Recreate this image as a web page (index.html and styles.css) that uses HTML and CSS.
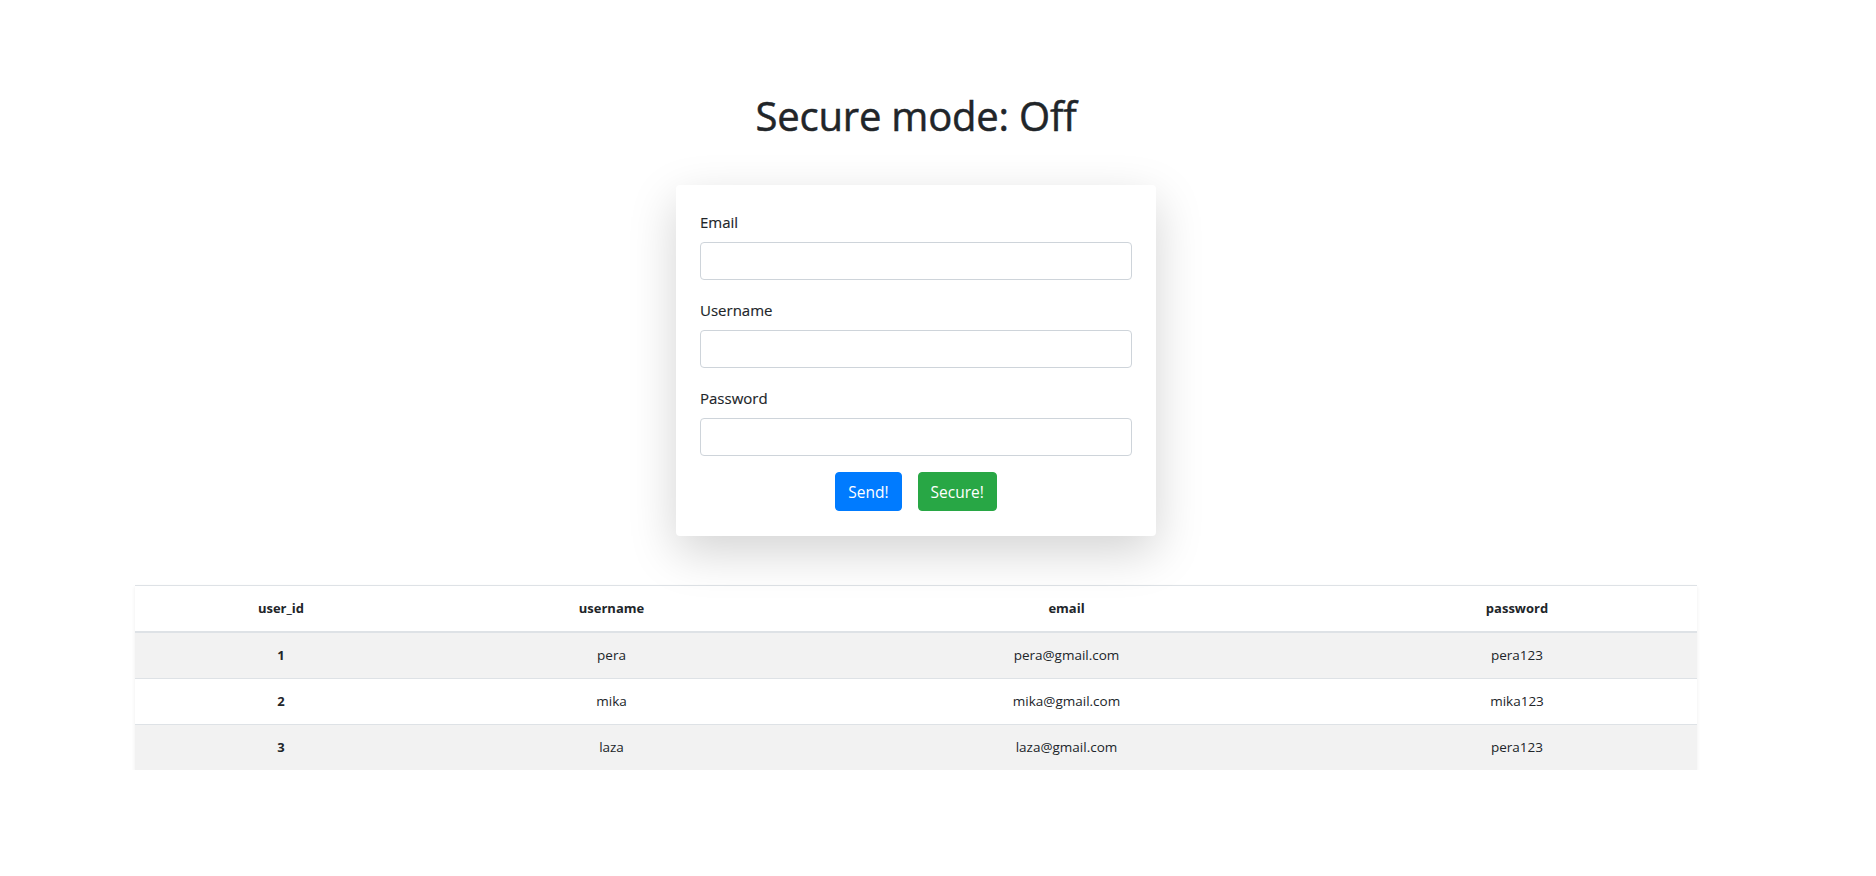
FILE: index.html
```html
<!DOCTYPE html>
<html lang="en">
<head>
<meta charset="utf-8">
<title>Secure mode</title>
<link rel="stylesheet" href="styles.css">
</head>
<body>
<div class="page">
  <h1 class="title">Secure mode: Off</h1>
  <form class="card">
    <div class="group">
      <label class="label" for="email">Email</label>
      <input class="input" id="email" type="text">
    </div>
    <div class="group">
      <label class="label" for="username">Username</label>
      <input class="input" id="username" type="text">
    </div>
    <div class="group last">
      <label class="label" for="password">Password</label>
      <input class="input" id="password" type="text">
    </div>
    <div class="actions">
      <button type="button" class="btn btn-blue">Send!</button>
      <button type="button" class="btn btn-green">Secure!</button>
    </div>
  </form>
  <table class="users">
    <thead>
      <tr>
        <th class="c1">user_id</th>
        <th class="c2">username</th>
        <th class="c3">email</th>
        <th class="c4">password</th>
      </tr>
    </thead>
    <tbody>
      <tr class="odd"><th>1</th><td>pera</td><td>pera@gmail.com</td><td>pera123</td></tr>
      <tr><th>2</th><td>mika</td><td>mika@gmail.com</td><td>mika123</td></tr>
      <tr class="odd"><th>3</th><td>laza</td><td>laza@gmail.com</td><td>pera123</td></tr>
    </tbody>
  </table>
</div>
</body>
</html>
```

FILE: styles.css
```css
html, body {
  margin: 0;
  padding: 0;
  background: #ffffff;
}

body {
  font-family: "Open Sans", "Noto Sans", sans-serif;
  color: #212529;
}

.page {
  width: 1832px;
  display: flex;
  flex-direction: column;
  align-items: center;
  padding-top: 92px;
}

.title {
  margin: 0;
  font-size: 40px;
  font-weight: 500;
  line-height: 48px;
  letter-spacing: -0.2px;
  -webkit-text-stroke: 0.5px #212529;
}

.card {
  margin-top: 45px;
  width: 480px;
  box-sizing: border-box;
  padding: 25px 24px 25px;
  background: #fff;
  border-radius: 4px;
  box-shadow: 0 16px 48px rgba(0, 0, 0, 0.175);
  position: relative;
  z-index: 1;
}

.group {
  display: flex;
  flex-direction: column;
  margin-bottom: 18px;
}

.group.last {
  margin-bottom: 16px;
}

.label {
  font-size: 15px;
  line-height: 24px;
  margin-bottom: 8px;
  -webkit-text-stroke: 0.15px #212529;
}

.input {
  height: 38px;
  box-sizing: border-box;
  border: 1px solid #ced4da;
  border-radius: 4px;
  padding: 6px 12px;
  font: inherit;
  margin: 0;
}

.actions {
  display: flex;
  justify-content: center;
  gap: 16px;
}

.btn {
  height: 39px;
  box-sizing: border-box;
  padding: 6px 12px;
  border: 1px solid transparent;
  border-radius: 4px;
  color: #fff;
  font-family: inherit;
  font-size: 15.5px;
  line-height: 24px;
  margin: 0;
}

.btn-blue {
  background: #007bff;
  border-color: #007bff;
}

.btn-green {
  background: #28a745;
  border-color: #28a745;
}

.users {
  margin-top: 49px;
  width: 1562px;
  border-collapse: collapse;
  font-size: 13.5px;
  line-height: 21px;
  box-shadow: 0 2px 4px rgba(0, 0, 0, 0.075);
  background: transparent;
  position: relative;
  z-index: 0;
}

.users th,
.users td {
  padding: 12px;
  text-align: center;
  border-top: 1px solid #dee2e6;
  vertical-align: top;
}

.users th {
  font-weight: 700;
  font-size: 13px;
}

.users thead th {
  border-bottom: 2px solid #dee2e6;
}

.users tbody td {
  font-weight: 400;
}

.users tbody tr.odd {
  background: rgba(0, 0, 0, 0.05);
}

.c1 { width: 268px; }
.c2 { width: 345px; }
.c3 { width: 517px; }
.c4 { width: 336px; }
```
